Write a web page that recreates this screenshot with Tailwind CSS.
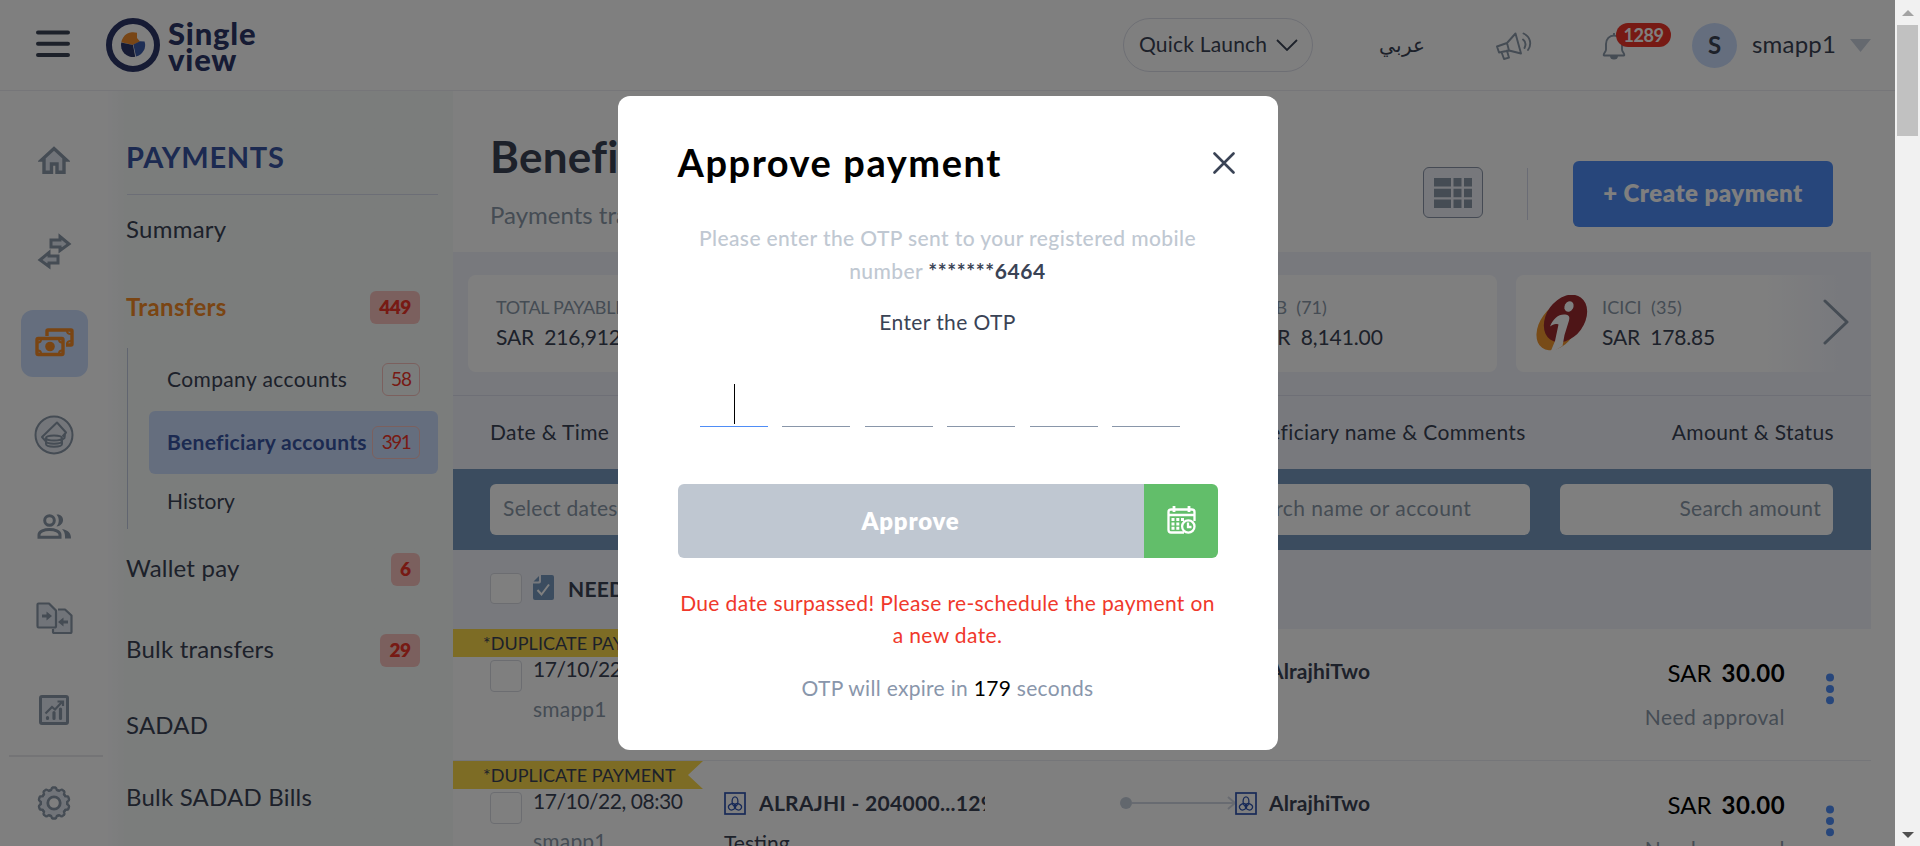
<!DOCTYPE html>
<html lang="en">
<head>
<meta charset="utf-8">
<title>Single view</title>
<script src="https://cdn.jsdelivr.net/npm/@tailwindcss/browser@4"></script>
</head>
<body class="h-[846px] w-[1920px] overflow-hidden bg-white font-['Lato',sans-serif] text-[#3a4355]">
<svg class="hidden">
  <symbol id="bank" viewBox="0 0 22 23">
    <rect x="1" y="1" width="20" height="21" fill="none" stroke="#2f54b0" stroke-width="1.7"/>
    <g fill="none" stroke="#2f54b0" stroke-width="1.300"><ellipse cx="11" cy="9.500" rx="2.900" ry="4.700"/><ellipse cx="8" cy="14.800" rx="3.600" ry="3" transform="rotate(-25 8 14.800)"/><ellipse cx="14" cy="14.800" rx="3.600" ry="3" transform="rotate(25 14 14.800)"/></g>
  </symbol>
  <symbol id="tooth" viewBox="-17 -17 34 34">
    <path d="M-4.100-12.600-2.900-12.900Q-2.200-15.400-1.400-15.500H1.400Q2.200-15.400 2.900-12.900L4.100-12.600"/>
  </symbol>
</svg>
<div class="relative flex h-full w-full">
  <div class="flex h-full w-[1895px] flex-col overflow-hidden">

    <!-- Top bar -->
    <header class="flex h-[91px] shrink-0 items-center border-b border-[#ededf2] pl-9">
      <svg class="-mt-[2px] h-7 w-[34px] shrink-0" viewBox="0 0 34 28" fill="none" stroke="#3a4355" stroke-width="4" stroke-linecap="round"><path d="M2 2.500h30M2 13.700h30M2 25h30"/></svg>
      <svg class="-mt-px ml-9 size-[54px] shrink-0" viewBox="0 0 54 54">
        <circle cx="27" cy="27" r="24" fill="none" stroke="#2c3668" stroke-width="6"/>
        <path d="M27 27 15.300 24.200A12 12 0 0 1 31 14.800L31 20l3 3.500z" fill="#f08c2c"/>
        <path d="M27 27 15.200 24.600A12 12 0 0 0 29.200 38.800z" fill="#2c3668"/>
        <path d="M27.400 26.600 34 23.200l4.600.2A12 12 0 0 1 30 38.600z" fill="#3d5cab"/>
      </svg>
      <div class="mt-px ml-2 w-[100px] text-[31px] leading-[26px] font-black tracking-[0.800px] text-[#2c3668]">Single<br>view</div>
      <div class="ml-[855px] flex h-[54px] w-[190px] shrink-0 items-center justify-between rounded-[27px] border border-[#dcdee9] pr-[14px] pl-[15px]">
        <span class="pb-[2px] whitespace-nowrap text-[21px] tracking-[0.200px]">Quick Launch</span>
        <svg class="h-3 w-[22px]" viewBox="0 0 22 12" fill="none" stroke="#3a4355" stroke-width="1.800"><path d="M1 1l10 10L21 1"/></svg>
      </div>
      <span class="ml-[69px] w-[43px] shrink-0 whitespace-nowrap font-['Noto_Sans',sans-serif] text-[20px] font-medium" dir="rtl">عربي</span>
      <svg class="mt-[2px] ml-[70px] h-7 w-[38px] shrink-0" viewBox="0 0 38 28" fill="none" stroke="#8a98a8" stroke-width="1.900" stroke-linejoin="round" stroke-linecap="round"><path d="M2 14.500 12 11 20.500 1.500 26 21.500 14 18.500 4 20.500zM12 11l2 7.500M6.500 20l2.500 7 5-1.300-2-7"/><path d="M28 7.500c2.500 2 3 5.500 1.500 8.500M28.500 1.500c7 3 8.500 11 4.500 16.500"/></svg>
      <div class="relative mt-[2px] ml-[69px] h-7 w-6 shrink-0">
        <svg class="h-7 w-6" viewBox="0 0 24 28" fill="none" stroke="#8a98a8" stroke-width="1.900" stroke-linejoin="round"><path d="M12 1v2M2 23.500c-1.500-1 2-3.500 2-6V12c0-5 3.500-8.500 8-8.500s8 3.500 8 8.500v5.500c0 2.500 3.500 5 2 6z"/><path d="M9 24c0 3.500 6 3.500 6 0" fill="#8a98a8"/></svg>
        <div class="absolute -top-[9px] left-[14px] flex h-6 w-[55px] items-center justify-center rounded-full bg-[#ee3528] text-[18px] font-bold tracking-[-0.500px] text-white">1289</div>
      </div>
      <div class="ml-[66px] flex size-[45px] shrink-0 items-center justify-center rounded-full bg-[#cbddfc] text-[24px] font-bold">S</div>
      <span class="ml-[15px] w-[85px] pb-[3px] text-[24px] tracking-[0.200px]">smapp1</span>
      <svg class="ml-[13px] h-[13px] w-[21px]" viewBox="0 0 21 13"><path d="M0 0h21L10.500 13z" fill="#cbd2df"/></svg>
    </header>

    <div class="flex min-h-0 grow">
      <!-- Icon rail -->
      <nav class="flex w-[108px] shrink-0 flex-col items-center pt-[24px]">
        <div class="flex h-[91.500px] w-full shrink-0 items-center justify-center pb-px">
          <svg class="h-7 w-8" viewBox="0 0 32 28" fill="#e3e8f2" stroke="#8a98a8" stroke-width="3.400"><path d="M6 26.300V14H3.500L16 2.500 28.500 14H26v12.300h-7V18h-5.500v8.300z"/></svg>
        </div>
        <div class="flex h-[91.500px] w-full shrink-0 items-center justify-center pb-[2px]">
          <svg class="h-[37px] w-[35px]" viewBox="0 0 35 37" fill="#e3e8f2" stroke="#8a98a8" stroke-width="3"><path d="M14 7h9V3.500l9 7.500-9 6.500V14h-9zM21 23h-9v-3.500L3 27l9 6.500V30h9z"/></svg>
        </div>
        <div class="flex h-[91.500px] w-full shrink-0 items-center justify-center">
          <div class="flex size-[67px] items-center justify-center rounded-xl bg-[#cbddfc]">
            <svg class="-mt-[2px] h-[29px] w-[39px]" viewBox="0 0 39 29" fill="none" stroke="#f48a26" stroke-width="3.400"><path d="M12 8V3q0-1 1-1h23q1 0 1 1v13q0 1-1 1h-5"/><rect x="2" y="10.500" width="26" height="16" rx="1.200"/><circle cx="15" cy="18.500" r="4.800" fill="#f48a26" stroke="none"/><path d="M3 14.500q3 0 3-3M27 14.500q-3 0-3-3M3 22.500q3 0 3 3M27 22.500q-3 0-3 3M32 3q0 3 4 3M36 13q-4 0-4 3" stroke-width="2"/></svg>
          </div>
        </div>
        <div class="flex h-[91.500px] w-full shrink-0 items-center justify-center">
          <svg class="size-10" viewBox="0 0 40 40" fill="none" stroke="#8a98a8" stroke-width="2"><circle cx="20" cy="20" r="18.500" fill="#e9edf4"/><path d="M12 26.500 8 22 23 7.500l9 10-3.500 4M31 19l-.5 4-4 3" stroke-linejoin="round"/><ellipse cx="20" cy="23" rx="8" ry="2.600"/><path d="M12 23v6c0 3.500 16 3.500 16 0v-6M12 26c0 3.500 16 3.500 16 0"/></svg>
        </div>
        <div class="flex h-[91.500px] w-full shrink-0 items-center justify-center">
          <svg class="h-[25px] w-[34px]" viewBox="0 0 34 25" fill="none" stroke="#8a98a8" stroke-width="3"><circle cx="12.500" cy="6.500" r="4.800"/><path d="M2 23.300v-2.500c0-7 21-7 21 0v2.500z"/><path d="M19.500.5c8-1 9.500 10.500 0 12 3-3.500 3-8.500 0-12zM25 15c6 1 9 4 9 9.500h-6c.3-4-.5-7-3-9.500z" fill="#8a98a8" stroke="none"/></svg>
        </div>
        <div class="flex h-[91.500px] w-full shrink-0 items-center justify-center">
          <svg class="h-8 w-[37px]" viewBox="0 0 37 32" fill="#e3e8f2" stroke="#8a98a8" stroke-width="2.200" stroke-linejoin="round"><path d="M22 7.500h7l6.500 6v16.500q0 1-1 1H18q-1 0-1-1v-3"/><path d="M2.500 1.500H13l7 7V24q0 1.500-1.500 1.500h-16Q1.500 25.500 1.500 24V2.500q0-1 1-1z"/><path d="M6 12.500h4.500v-3l5.500 4.500-5.500 4.500v-3H6zM32 18.500h-4.500v-3L22 20l5.500 4.500v-3H32z" fill="#8a98a8" stroke="none"/></svg>
        </div>
        <div class="flex h-[91.500px] w-full shrink-0 items-center justify-center">
          <svg class="size-[30px]" viewBox="0 0 30 30" fill="none" stroke="#8a98a8" stroke-width="3"><rect x="1.500" y="1.500" width="27" height="27" rx="1.500" fill="#e3e8f2"/><path d="M8.500 23.500v-1M15 23.500v-6M21.500 23.500V14" stroke-linecap="round" stroke-width="3.200"/><path d="M6.500 18.500 13 12l3 2.500 7-7.500M18.500 6.500H24V11" stroke-width="2.200"/></svg>
        </div>
        <div class="-mt-px ml-1 h-[2px] w-[94px] shrink-0 bg-[#e8e9ed]"></div>
        <svg class="mt-[29px] size-[34px] shrink-0" viewBox="-17 -17 34 34" fill="#e3e8f2" stroke="#8a98a8" stroke-width="2.400" stroke-linejoin="round" stroke-linecap="round">
          <circle r="12.500" stroke="none"/>
          <g id="pair"><use href="#tooth" x="-17" y="-17" width="34" height="34"/><use href="#tooth" x="-17" y="-17" width="34" height="34" transform="rotate(36)"/></g>
          <use href="#pair" transform="rotate(72)"/><use href="#pair" transform="rotate(144)"/><use href="#pair" transform="rotate(216)"/><use href="#pair" transform="rotate(288)"/>
          <circle r="6.200" fill="#fff" stroke-width="2.800"/>
        </svg>
      </nav>

      <!-- Payments menu -->
      <aside class="flex w-[345px] shrink-0 flex-col bg-linear-to-r from-[#fdfdff] from-0% via-[#f7faf9] via-5% to-[#f7faf9] pr-[15px] pl-[19px]">
        <div class="flex h-[104px] shrink-0 items-center border-b border-[#d9dcec] pt-7 text-[29px] font-bold tracking-[0.700px] text-[#3855a3]"><span class="-ml-px">PAYMENTS</span></div>
        <div class="-ml-px flex h-[70px] shrink-0 items-center pb-[3px] text-[24px] tracking-[0.250px]">Summary</div>
        <div class="-ml-px flex h-[83px] shrink-0 items-center justify-between pt-[2px] pr-[18px]">
          <span class="pb-[2px] text-[24px] font-bold tracking-[0.350px] text-[#f48a26]">Transfers</span>
          <span class="flex h-[33px] w-[50px] items-center justify-center rounded-md bg-[#f7c1bc] text-[19px] font-extrabold tracking-[-0.500px] text-[#ee3528]">449</span>
        </div>
        <div class="flex h-[181px] shrink-0 flex-col border-l border-[#c3cbe0] pl-[21px] text-[21px]">
          <div class="flex h-[63px] items-center justify-between pr-[18px] pl-[18px]">
            <span class="pb-[2px] tracking-[0.380px]">Company accounts</span>
            <span class="flex h-[33px] w-[38px] items-center justify-center rounded-md border border-[#f7c1bc] text-[19px] tracking-[-1px] text-[#ee3528]">58</span>
          </div>
          <div class="flex h-[63px] items-center justify-between rounded-md bg-[#cbddfc] pr-[18px] pl-[18px]">
            <span class="pb-[2px] whitespace-nowrap font-bold tracking-[0.320px] text-[#3855a3]">Beneficiary accounts</span>
            <span class="flex h-[33px] w-12 shrink-0 items-center justify-center rounded-md border border-[#f7c1bc] text-[19px] tracking-[-1.500px] text-[#ee3528]">391</span>
          </div>
          <div class="flex h-[55px] items-center pb-[2px] pl-[18px]">History</div>
        </div>
        <div class="-ml-px flex h-[81px] shrink-0 items-center justify-between pr-[18px]">
          <span class="pb-[3px] text-[24px] tracking-[0.200px]">Wallet pay</span>
          <span class="flex h-[33px] w-[29px] items-center justify-center rounded-md bg-[#f7c1bc] text-[19px] font-extrabold text-[#ee3528]">6</span>
        </div>
        <div class="-ml-px flex h-[81px] shrink-0 items-center justify-between pr-[18px]">
          <span class="pb-[3px] text-[24px] tracking-[0.200px]">Bulk transfers</span>
          <span class="flex h-[33px] w-10 items-center justify-center rounded-md bg-[#f7c1bc] text-[19px] font-extrabold tracking-[-0.500px] text-[#ee3528]">29</span>
        </div>
        <div class="-ml-px flex h-[71px] shrink-0 items-center pb-1 text-[24px] tracking-[0.200px]">SADAD</div>
        <div class="-ml-px flex h-[72px] shrink-0 items-center pb-[3px] text-[24px] tracking-[0.200px]">Bulk SADAD Bills</div>
      </aside>

      <!-- Content -->
      <main class="flex w-[1418px] shrink-0 flex-col overflow-hidden">
        <div class="flex h-[161px] shrink-0 items-start justify-between pr-[38px] pl-[37px]">
          <div>
            <h1 class="mt-[39px] w-[420px] text-[44px] leading-[52px] font-bold tracking-[0.270px] whitespace-nowrap">Beneficiary accounts</h1>
            <p class="mt-[17px] text-[24px] leading-[32px] text-[#8a98a8]">Payments transfers</p>
          </div>
          <div class="mt-[70px] flex h-[66px] items-center">
            <div class="-mt-[3px] flex h-[51px] w-[60px] items-center justify-center rounded-md border border-[#8a95a8] bg-[#eef0f8]">
              <svg class="h-[30px] w-[38px]" viewBox="0 0 38 30" fill="#8a98a8"><path d="M0 0h17v8.500H0zM19.500 0h8v8.500h-8zM30 0h8v8.500h-8zM0 10.800h17v8.500H0zM19.500 10.800h8v8.500h-8zM30 10.800h8v8.500h-8zM0 21.500h17V30H0zM19.500 21.500h8V30h-8zM30 21.500h8V30h-8z"/></svg>
            </div>
            <div class="ml-11 h-[52px] w-px bg-[#d4d8ea]"></div>
            <div class="ml-[45px] flex h-[66px] w-[260px] items-center justify-center rounded-md bg-[#4f8df6] pb-[2px] text-[24px] font-extrabold tracking-[0.500px] text-white">+ Create payment</div>
          </div>
        </div>

        <div class="relative flex h-[144px] shrink-0 items-start gap-[19px] overflow-hidden border-b border-[#dcdfec] bg-[#f1f3fb] pt-[23px] pl-[15px] text-[21px] leading-[31px]">
          <div class="h-[97px] w-[331px] shrink-0 rounded-lg bg-white pt-[17px] pl-7"><div class="text-[18px] tracking-[-0.290px] text-[#8a98a8]">TOTAL PAYABLE (449)</div><div class="-mt-[2px] tracking-[-0.200px]">SAR&nbsp; 216,912.00</div></div>
          <div class="h-[97px] w-[329px] shrink-0 rounded-lg bg-white"></div>
          <div class="h-[97px] w-[331px] shrink-0 rounded-lg bg-white pt-[17px] pl-[86px]"><div class="text-[18px] text-[#8a98a8]">SNB&nbsp; (71)</div><div class="-mt-[2px] tracking-[-0.100px]">SAR&nbsp; 8,141.00</div></div>
          <div class="flex h-[97px] w-[334px] shrink-0 rounded-lg bg-white pl-5">
            <svg class="mt-5 h-[57px] w-[52px]" viewBox="0 0 52 57"><ellipse cx="22" cy="31" rx="18" ry="27" transform="rotate(36 22 31)" fill="#f0962f"/><ellipse cx="29.500" cy="23.500" rx="19" ry="26" transform="rotate(36 29.500 23.500)" fill="#9c2a2f"/><ellipse cx="33" cy="11.500" rx="4.300" ry="5.500" transform="rotate(30 33 11.500)" fill="#fff"/><path d="M14 31.500C17 24 22 19.500 28 19.500c5 0 6 2 5 6L28.500 40l-2 11-5 3-7.500 4 5-12 3.500-16.500C19 28.500 17 29.500 14 31.500z" fill="#fff"/></svg>
            <div class="ml-[14px] pt-[17px]"><div class="text-[18px] tracking-[0.100px] text-[#8a98a8]">ICICI&nbsp; (35)</div><div class="-mt-[2px] tracking-[-0.200px]">SAR&nbsp; 178.85</div></div>
          </div>
          <div class="absolute top-0 right-0 flex h-[143px] w-[110px] items-center justify-end bg-linear-to-r from-[#f1f3fb]/0 to-[#f1f3fb] to-70% pr-[22px]">
            <svg class="-mt-[3px] h-[46px] w-[26px]" viewBox="0 0 26 46" fill="none" stroke="#8a98a8" stroke-width="3" stroke-linecap="round" stroke-linejoin="round"><path d="M2 2l22 21L2 44"/></svg>
          </div>
        </div>

        <div class="grid h-[73px] shrink-0 grid-cols-[742px_1fr_auto] items-center bg-[#f1f3fb] pr-[37px] pb-[2px] pl-[37px] text-[21px] tracking-[0.350px]">
          <span>Date &amp; Time</span><span class="whitespace-nowrap">Beneficiary name &amp; Comments</span><span>Amount &amp; Status</span>
        </div>
        <div class="flex h-[81px] shrink-0 items-center justify-between bg-[#7799be] pr-[38px] pl-[37px] text-[21px] tracking-[0.300px] text-[#8a98a8]">
          <div class="h-[51px] w-[196px] rounded-md bg-white px-[13px] leading-[48px]">Select dates</div>
          <div class="h-[51px] w-[480px] rounded-md bg-white px-3 leading-[48px]">Search account</div>
          <div class="h-[51px] w-[304px] rounded-md bg-white px-[15px] leading-[48px] tracking-[0.450px]">Search name or account</div>
          <div class="h-[51px] w-[273px] rounded-md bg-white px-3 text-right leading-[48px]">Search amount</div>
        </div>
        <div class="flex h-[79px] shrink-0 items-center bg-[#f1f3fb] pl-[37px]">
          <div class="-mt-[2px] h-[31px] w-8 rounded border border-[#d8dae3] bg-white"></div>
          <svg class="-mt-1 ml-[11px] h-[25px] w-[21px]" viewBox="0 0 21 25"><path d="M8 0h11q2 0 2 2v21q0 2-2 2H2q-2 0-2-2V8.500h6q2 0 2-2z" fill="#7799be"/><path d="M6 1v4.500q0 1-1 1H.5z" fill="#7799be"/><path d="M4.500 15l4 4.500 7.500-10" fill="none" stroke="#fff" stroke-width="2"/></svg>
          <span class="ml-[14px] pb-px text-[21px] font-bold tracking-[0.200px]">NEED APPROVAL</span>
        </div>

        <div class="relative flex h-[132px] shrink-0 items-start border-b border-[#ebecf3] pl-[37px] text-[21px] leading-[30px]">
          <div class="absolute top-0 left-0 h-7 w-[250px] bg-[#fbd94b] pl-[30px] text-[18px] leading-[28px] tracking-[0.050px] whitespace-nowrap [clip-path:polygon(0_0,100%_0,94%_50%,100%_100%,0_100%)]">*DUPLICATE PAYMENT</div>
          <div class="mt-[31px] h-8 w-8 shrink-0 rounded border border-[#d8dae3] bg-white"></div>
          <div class="ml-[11px] w-[177px] shrink-0 pt-[25px]"><div class="tracking-[-0.450px]">17/10/22, 08:30</div><div class="mt-[10px] tracking-[0.200px] text-[#8a98a8]">smapp1</div></div>
          <div class="ml-[525px] flex items-center pt-[27px]"><svg class="h-[23px] w-[22px]"><use href="#bank"/></svg><span class="ml-3 font-bold tracking-[0.100px]">AlrajhiTwo</span></div>
          <div class="ml-auto pt-[29px] pr-[86px] text-right"><div class="text-[24px] text-black">SAR <b class="ml-1 tracking-[0.400px]">30.00</b></div><div class="mt-[14px] tracking-[0.500px] text-[#8a98a8]">Need approval</div></div>
          <svg class="absolute top-[44px] right-[37px] h-8 w-2" viewBox="0 0 8 32" fill="#4f8df6"><circle cx="4" cy="4.500" r="4"/><circle cx="4" cy="16" r="4"/><circle cx="4" cy="27.300" r="4"/></svg>
        </div>

        <div class="relative flex h-[132px] shrink-0 items-start pl-[37px] text-[21px] leading-[30px]">
          <div class="absolute top-0 left-0 h-7 w-[250px] bg-[#fbd94b] pl-[30px] text-[18px] leading-[28px] tracking-[0.050px] whitespace-nowrap [clip-path:polygon(0_0,100%_0,94%_50%,100%_100%,0_100%)]">*DUPLICATE PAYMENT</div>
          <div class="mt-[31px] h-8 w-8 shrink-0 rounded border border-[#d8dae3] bg-white"></div>
          <div class="ml-[11px] w-[191px] shrink-0 pt-[25px]"><div class="tracking-[-0.450px]">17/10/22, 08:30</div><div class="mt-[10px] tracking-[0.200px] text-[#8a98a8]">smapp1</div></div>
          <div class="w-[396px] shrink-0 pt-[27px]">
            <div class="flex items-center"><svg class="h-[23px] w-[22px] shrink-0"><use href="#bank"/></svg><span class="ml-[13px] w-[226px] overflow-hidden font-bold tracking-[0.300px] whitespace-nowrap">ALRAJHI - 204000...12900</span></div>
            <div class="mt-[10px]">Testing</div>
          </div>
          <svg class="mt-[34px] h-4 w-[115px] shrink-0" viewBox="0 0 115 16" fill="none" stroke="#d0d6e2" stroke-width="2"><circle cx="6" cy="8" r="6" fill="#c5cedb" stroke="none"/><path d="M12 8h102M108 2l7 6-7 6"/></svg>
          <div class="flex shrink-0 items-center pt-[27px]"><svg class="h-[23px] w-[22px]"><use href="#bank"/></svg><span class="ml-3 font-bold tracking-[0.100px]">AlrajhiTwo</span></div>
          <div class="ml-auto pt-[29px] pr-[86px] text-right"><div class="text-[24px] text-black">SAR <b class="ml-1 tracking-[0.400px]">30.00</b></div><div class="mt-[14px] tracking-[0.500px] text-[#8a98a8]">Need approval</div></div>
          <svg class="absolute top-[44px] right-[37px] h-8 w-2" viewBox="0 0 8 32" fill="#4f8df6"><circle cx="4" cy="4.500" r="4"/><circle cx="4" cy="16" r="4"/><circle cx="4" cy="27.300" r="4"/></svg>
        </div>
      </main>
    </div>
  </div>

  <!-- Page scrollbar -->
  <div class="flex w-[25px] shrink-0 flex-col items-center justify-between bg-[#f1f1f1] pt-[10px] pb-[8px]">
    <div class="flex flex-col items-center gap-[9px]">
      <svg class="h-[6px] w-3" viewBox="0 0 12 6"><path d="M0 6 6 0l6 6z" fill="#a3a3a3"/></svg>
      <div class="h-[111px] w-[21px] bg-[#c1c1c1]"></div>
    </div>
    <svg class="h-[6px] w-3" viewBox="0 0 12 6"><path d="M0 0l6 6 6-6z" fill="#505050"/></svg>
  </div>

  <!-- Approve payment dialog -->
  <div class="absolute inset-y-0 left-0 flex w-[1895px] items-start justify-center bg-black/50 pt-24">
    <div class="flex h-[654px] w-[660px] flex-col rounded-xl bg-white pt-11">
      <div class="flex h-11 items-center justify-between pr-[43px] pl-[60px]">
        <h2 class="text-[38px] font-bold tracking-[1.550px] whitespace-nowrap text-black">Approve payment</h2>
        <svg class="mt-px size-[22px]" viewBox="0 0 22 22" stroke="#3a4355" stroke-width="2.600" stroke-linecap="round"><path d="M1.500 1.500l19 19M20.500 1.500l-19 19"/></svg>
      </div>
      <p class="mt-[37px] text-center text-[21px] leading-[33px] font-medium tracking-[0.400px] text-[#c0c8d2]">Please enter the OTP sent to your registered mobile<br>number <b class="tracking-[0.580px] text-[#3a4355]">*******6464</b></p>
      <p class="mt-[18px] text-center text-[21px] leading-[33px] tracking-[0.400px]">Enter the OTP</p>
      <div class="mt-[41px] flex h-12 justify-between pr-[97px] pl-[82px]">
        <div class="flex w-[68px] justify-center border-b border-[#4f8df6] pt-[5px]"><div class="ml-px h-10 w-px bg-black"></div></div>
        <div class="w-[68px] border-b border-[#8996a9]"></div>
        <div class="w-[68px] border-b border-[#8996a9]"></div>
        <div class="w-[68px] border-b border-[#8996a9]"></div>
        <div class="w-[68px] border-b border-[#8996a9]"></div>
        <div class="w-[68px] border-b border-[#8996a9]"></div>
      </div>
      <div class="mx-[60px] mt-[57px] flex h-[74px] overflow-hidden rounded-md">
        <div class="flex w-[466px] items-center justify-center bg-[#bfc7d1] pb-px text-[24px] font-extrabold tracking-[0.800px] text-white">Approve</div>
        <div class="flex grow items-center justify-center bg-[#62be6a] pb-[2px] pl-px">
          <svg class="h-7 w-[29px]" viewBox="0 0 29 28" fill="none" stroke="#fff" stroke-width="2.300"><path d="M17 26.500H4q-2.500 0-2.500-2.500V6Q1.500 3.500 4 3.500h21Q27.500 3.500 27.500 6v9M1.500 9h26"/><path d="M7 0v6M22 0v6" stroke-width="2.800"/><path d="M4.500 13.500h3M9.300 13.500h3M14 13.500h3M4.500 18h3M9.300 18h3M4.500 22.300h3M9.300 22.300h3" stroke-width="3"/><circle cx="21.300" cy="20.500" r="6.200"/><path d="M21 16.500v4.500h3.500"/></svg>
        </div>
      </div>
      <p class="mt-[29px] text-center text-[21px] leading-8 tracking-[0.370px] text-[#f0382b]">Due date surpassed! Please re-schedule the payment on<br>a new date.</p>
      <p class="mt-5 text-center text-[21px] leading-[33px] tracking-[0.300px] text-[#8996ab]">OTP will expire in <span class="text-black">179</span> seconds</p>
    </div>
  </div>
</div>
</body>
</html>
